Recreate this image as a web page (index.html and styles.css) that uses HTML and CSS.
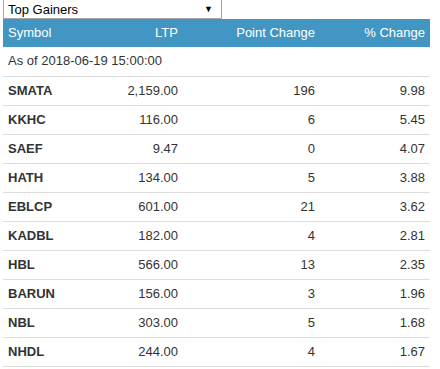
FILE: index.html
```html
<!DOCTYPE html>
<html>
<head>
<meta charset="utf-8">
<link rel="stylesheet" href="styles.css">
</head>
<body>
<div class="widget">
  <div class="picker">
    <span class="picker-label">Top Gainers</span>
    <span class="picker-arrow">&#9660;</span>
  </div>
  <table class="movers">
    <colgroup>
      <col class="c-sym"><col class="c-ltp"><col class="c-pt"><col class="c-pct">
    </colgroup>
    <thead>
      <tr><th class="l">Symbol</th><th class="r">LTP</th><th class="r">Point Change</th><th class="r">% Change</th></tr>
    </thead>
    <tbody>
      <tr class="asof"><td colspan="4">As of 2018-06-19 15:00:00</td></tr>
      <tr><td class="sym">SMATA</td><td class="r">2,159.00</td><td class="r">196</td><td class="r">9.98</td></tr>
      <tr><td class="sym">KKHC</td><td class="r">116.00</td><td class="r">6</td><td class="r">5.45</td></tr>
      <tr><td class="sym">SAEF</td><td class="r">9.47</td><td class="r">0</td><td class="r">4.07</td></tr>
      <tr><td class="sym">HATH</td><td class="r">134.00</td><td class="r">5</td><td class="r">3.88</td></tr>
      <tr><td class="sym">EBLCP</td><td class="r">601.00</td><td class="r">21</td><td class="r">3.62</td></tr>
      <tr><td class="sym">KADBL</td><td class="r">182.00</td><td class="r">4</td><td class="r">2.81</td></tr>
      <tr><td class="sym">HBL</td><td class="r">566.00</td><td class="r">13</td><td class="r">2.35</td></tr>
      <tr><td class="sym">BARUN</td><td class="r">156.00</td><td class="r">3</td><td class="r">1.96</td></tr>
      <tr><td class="sym">NBL</td><td class="r">303.00</td><td class="r">5</td><td class="r">1.68</td></tr>
      <tr><td class="sym">NHDL</td><td class="r">244.00</td><td class="r">4</td><td class="r">1.67</td></tr>
    </tbody>
  </table>
</div>
</body>
</html>
```
FILE: styles.css
```css
html, body {
  margin: 0;
  padding: 0;
  background: #fff;
}
body {
  font-family: "Liberation Sans", Arial, sans-serif;
  font-size: 13px;
  color: #333;
}
.widget {
  padding: 0 10px 0 3px;
  width: 427px;
}
.picker {
  width: 219px;
  height: 19px;
  box-sizing: border-box;
  border: 1px solid #a6a6a6;
  border-top: none;
  display: flex;
  align-items: center;
  justify-content: space-between;
  padding: 0 8px 0 4px;
  font-size: 13px;
  color: #000;
  line-height: 17px;
}
.picker-arrow {
  font-size: 9px;
  color: #000;
}
.movers {
  width: 427px;
  border-collapse: collapse;
  table-layout: fixed;
}
.c-sym { width: 97px; }
.c-ltp { width: 83px; }
.c-pt { width: 137px; }
.c-pct { width: 110px; }
.movers th {
  background: #4296c4;
  color: #fff;
  font-weight: normal;
  padding: 4px 5px;
  line-height: 20px;
  white-space: nowrap;
}
.movers td {
  padding: 4px 5px;
  line-height: 20px;
  border-bottom: 1px solid #dddddd;
  white-space: nowrap;
}
.movers .asof td {
  padding-bottom: 5px;
}
.movers .l { text-align: left; }
.movers .r { text-align: right; }
.movers .sym { font-weight: bold; }
```
